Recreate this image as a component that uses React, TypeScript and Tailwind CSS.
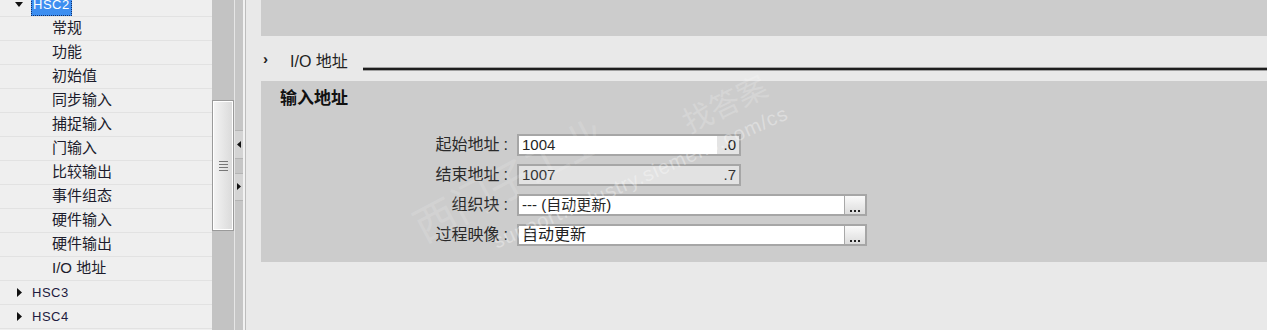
import React from 'react'

const ui = { fontFamily: '"Liberation Sans", "Noto Sans CJK SC", sans-serif' }

const children = ['常规', '功能', '初始值', '同步输入', '捕捉输入', '门输入', '比较输出', '事件组态', '硬件输入', '硬件输出', 'I/O 地址']

function Tri({ dir }: { dir: 'down' | 'right' | 'left' }) {
  if (dir === 'down') return <svg width="8" height="5" viewBox="0 0 8 5"><path d="M0 0h8L4 5z" fill="#111" /></svg>
  if (dir === 'right') return <svg width="5" height="9" viewBox="0 0 5 9"><path d="M0 0l5 4.5L0 9z" fill="#111" /></svg>
  return <svg width="4" height="7" viewBox="0 0 4 7"><path d="M4 0L0 3.5 4 7z" fill="#111" /></svg>
}

function Tree() {
  return (
    <div className="w-[212px] shrink-0 bg-[#efefef] text-[#1c1c2c] overflow-hidden">
      <div className="-mt-[7px]">
        <div className="h-[24px] border-b border-[#e2e2e2] flex items-center pl-[15px]">
          <Tri dir="down" />
          <span className="ml-[8px] px-[1px] h-[22px] leading-[20px] text-[13px] bg-[#3d8ef0] text-white border border-dotted border-[#10306a] tracking-[0.5px]">HSC2</span>
        </div>
        {children.map(c => (
          <div key={c} className="h-[24px] border-b border-[#e2e2e2] flex items-center pl-[52px] text-[15px]">{c}</div>
        ))}
        {['HSC3', 'HSC4'].map(c => (
          <div key={c} className="h-[24px] border-b border-[#e2e2e2] flex items-center pl-[17px]">
            <Tri dir="right" />
            <span className="ml-[10px] text-[13px] tracking-[0.5px] text-[#1e1a40]">{c}</span>
          </div>
        ))}
      </div>
    </div>
  )
}

function Scrollbar() {
  return (
    <div className="w-[23px] shrink-0 bg-[#c3c3c3] border-r border-[#e6e6e6]">
      <div className="mt-[100px] h-[131px] border border-[#9a9a9a] bg-gradient-to-r from-[#f4f4f4] to-[#dadada] shadow-[inset_1px_1px_0_#fff,inset_-1px_-1px_0_#fff] flex flex-col items-center justify-center gap-[2px]">
        <div className="w-[9px] h-[1px] bg-[#777]" />
        <div className="w-[9px] h-[1px] bg-[#777]" />
        <div className="w-[9px] h-[1px] bg-[#777]" />
        <div className="w-[9px] h-[1px] bg-[#777]" />
      </div>
    </div>
  )
}

function Splitter() {
  return (
    <div className="w-[10px] shrink-0 bg-[#c6c6c6] border-r-2 border-[#f2f2f2] flex flex-col">
      <div className="mt-[130px] h-[29px] bg-[#d4d4d4] border-y border-[#b4b4b4] flex items-center justify-center"><Tri dir="left" /></div>
      <div className="mt-[14px] h-[28px] bg-[#d4d4d4] border-y border-[#b4b4b4] flex items-center justify-center rotate-180"><Tri dir="left" /></div>
    </div>
  )
}

function Dots() {
  return (
    <div className="w-[21px] h-full border-l border-[#a8a8a8] bg-gradient-to-b from-[#fafafa] to-[#dcdcdc] flex items-end justify-center pb-[2px] gap-[2px]">
      <div className="w-[2px] h-[2px] bg-[#222]" />
      <div className="w-[2px] h-[2px] bg-[#222]" />
      <div className="w-[2px] h-[2px] bg-[#222]" />
    </div>
  )
}

function Row({ label, children }: { label: string; children: React.ReactNode }) {
  return (
    <div className="flex items-center h-[22px]">
      <div className="w-[256px] pr-[9px] flex justify-end items-center text-[16px] text-[#2a2a2a]">
        <span>{label}</span>
        <span className="ml-[4px]">:</span>
      </div>
      {children}
    </div>
  )
}

function Form() {
  return (
    <div className="bg-[#cccccc] pt-[6px] pb-[16px]">
      <div className="pl-[19px] h-[24px] leading-[24px] text-[17px] font-bold text-[#111]">输入地址</div>
      <div className="mt-[23px] flex flex-col gap-[8px]">
        <Row label="起始地址">
          <div className="w-[224px] h-[22px] border-2 border-[#a6a6a6] flex text-[15px] text-[#222]">
            <div className="flex-1 bg-white pl-[3px] leading-[18px]">1004</div>
            <div className="w-[22px] bg-[#e4e4e4] text-right pr-[3px] leading-[18px]">.0</div>
          </div>
        </Row>
        <Row label="结束地址">
          <div className="w-[224px] h-[22px] border-2 border-[#a6a6a6] bg-[#e2e2e2] flex justify-between px-[3px] text-[15px] leading-[18px] text-[#333]">
            <span>1007</span>
            <span>.7</span>
          </div>
        </Row>
        <Row label="组织块">
          <div className="w-[350px] h-[22px] border-2 border-[#a6a6a6] bg-white flex text-[15px] text-[#222]">
            <div className="flex-1 pl-[3px] leading-[18px]">--- (自动更新)</div>
            <Dots />
          </div>
        </Row>
        <Row label="过程映像">
          <div className="w-[350px] h-[22px] border-2 border-[#a6a6a6] bg-white flex text-[15px] text-[#222]">
            <div className="flex-1 pl-[3px] leading-[18px] text-[16px]">自动更新</div>
            <Dots />
          </div>
        </Row>
      </div>
    </div>
  )
}

export default function App() {
  return (
    <div className="relative w-[1267px] h-[330px] overflow-hidden flex" style={ui}>
      <Tree />
      <Scrollbar />
      <Splitter />
      <div className="flex-1 bg-[#e9e9e9] border-l border-[#bdbdbd] pl-[15px]">
        <div className="h-[36px] bg-[#cccccc]" />
        <div className="h-[45px] flex items-start">
          <span className="w-[29px] mt-[13px] pl-[2px] text-[15px] font-bold leading-[20px] text-[#222]">›</span>
          <span className="mt-[16px] text-[16px] leading-[20px] text-[#222]">I/O 地址</span>
          <div className="flex-1 ml-[15px] mt-[32px] h-[2px] bg-[#1e1e1e] shadow-[0_1px_0_#a0a0a0,0_-1px_0_#a0a0a0]" />
        </div>
        <Form />
      </div>
      <div className="absolute left-[480px] top-[162px] -rotate-[24deg] text-[20px] text-white/35 pointer-events-none whitespace-nowrap tracking-[1px]">support.industry.siemens.com/cs</div>
      <div className="absolute left-[405px] top-[150px] -rotate-[28deg] text-[42px] text-white/15 pointer-events-none whitespace-nowrap">西门子工业</div>
      <div className="absolute left-[680px] top-[82px] -rotate-[26deg] text-[30px] text-white/20 pointer-events-none whitespace-nowrap">找答案</div>
    </div>
  )
}
